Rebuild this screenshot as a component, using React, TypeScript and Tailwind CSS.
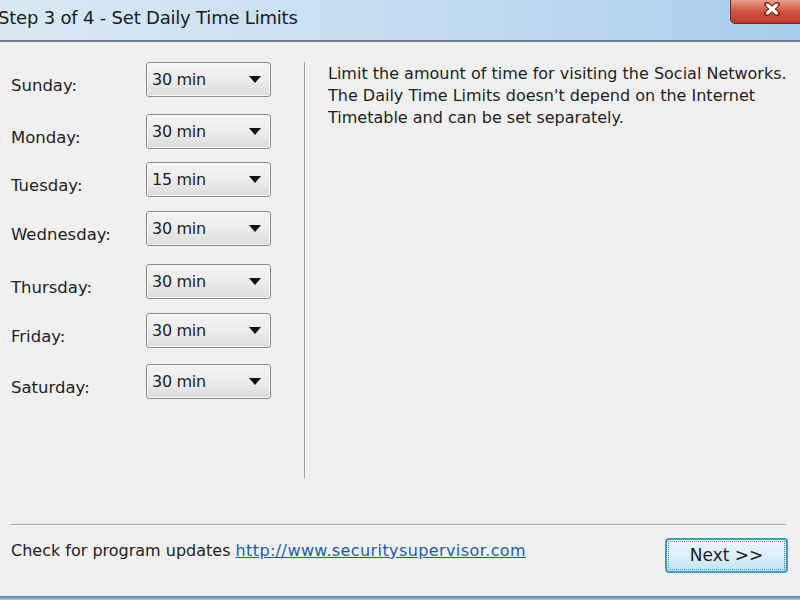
const LIMITS = [
  { day: "Sunday:", value: "30 min", gap: "mt-[20px]" },
  { day: "Monday:", value: "30 min", gap: "mt-[17px]" },
  { day: "Tuesday:", value: "15 min", gap: "mt-[13px]" },
  { day: "Wednesday:", value: "30 min", gap: "mt-[14px]" },
  { day: "Thursday:", value: "30 min", gap: "mt-[18px]" },
  { day: "Friday:", value: "30 min", gap: "mt-[14px]" },
  { day: "Saturday:", value: "30 min", gap: "mt-[16px]" },
];

function Combo({ value }: { value: string }) {
  return (
    <div className="w-[125px] h-[35px] rounded-[3px] border border-[#8a8a8a] bg-gradient-to-b from-[#f4f4f4] via-[#ececec] to-[#dcdcdc] flex items-center justify-between pl-[5px] pr-[9px] shadow-[inset_0_0_0_1px_#fbfbfb]">
      <span className="text-[16px] text-[#1e1e1e] tracking-[-0.3px]">{value}</span>
      <svg width="12" height="7" viewBox="0 0 12 7">
        <path d="M0 0h12L6 7z" fill="#111" />
      </svg>
    </div>
  );
}

export default function App() {
  return (
    <div
      className="w-[800px] h-[600px] overflow-hidden flex flex-col bg-[#f0f0f0] text-[#222]"
      style={{ fontFamily: '"DejaVu Sans", Tahoma, sans-serif' }}
    >
      {/* Caption bar */}
      <div className="h-[40px] shrink-0 relative bg-gradient-to-r from-[#dbe8f4] via-[#c5ddf2] to-[#a9cdee] flex items-start">
        <span className="ml-[-2px] mt-[4px] text-[18px] text-[#1b1b1b] tracking-[-0.2px]">
          Step 3 of 4 - Set Daily Time Limits
        </span>
        <div className="absolute right-[-12px] top-[-2px] w-[82px] h-[26px] rounded-b-[5px] border border-[#6b2a22] bg-gradient-to-b from-[#e8a394] via-[#d0553f] to-[#c0392a] flex items-start justify-center pl-[2px] pt-[3px]">
          <svg width="16" height="14" viewBox="0 0 16 14">
            <path d="M3 2.5l10 9M13 2.5l-10 9" stroke="#7a2418" strokeWidth="5.5" strokeLinecap="round" />
            <path d="M3.5 3l9 8M12.5 3l-9 8" stroke="#fff" strokeWidth="3.2" strokeLinecap="round" />
          </svg>
        </div>
      </div>
      <div className="h-[2px] shrink-0 bg-[#6f7d8c]" />

      {/* Body */}
      <div className="flex-1 flex min-h-0">
        <div className="w-[293px] shrink-0 flex flex-col ml-[11px]">
          {LIMITS.map((row) => (
            <div key={row.day} className={`${row.gap} flex items-start`}>
              <span className="w-[135px] text-[16.5px] leading-[20px] mt-[14px]">{row.day}</span>
              <Combo value={row.value} />
            </div>
          ))}
        </div>
        <div className="mt-[20px] h-[416px] w-[2px] border-l border-[#a0a0a0] bg-[#fdfdfd]" />
        <p className="ml-[22px] mt-[21px] text-[16px] leading-[22px] text-[#1e1e1e] w-[470px]">
          Limit the amount of time for visiting the Social Networks. The Daily Time Limits doesn't depend on the
          Internet Timetable and can be set separately.
        </p>
      </div>

      {/* Footer */}
      <div className="shrink-0 px-[11px] pb-[23px]">
        <div className="h-[2px] w-[775px] border-t border-[#a0a0a0] bg-[#fdfdfd]" />
        <div className="flex items-start justify-between mt-[12px]">
          <span className="text-[16px] mt-[1px]">
            Check for program updates{" "}
            <a className="text-[#1a5ea8] underline tracking-[0.4px]" href="#">
              http://www.securitysupervisor.com
            </a>
          </span>
          <button className="mr-[1px] w-[123px] h-[35px] rounded-[4px] border-2 border-[#3f9ac4] bg-gradient-to-b from-[#eaf6fc] via-[#dcf0fa] to-[#c3e3f3] text-[17px] text-[#1b1b1b] outline-1 outline-dotted outline-[#5a8ba6] -outline-offset-[4px]">
            Next &gt;&gt;
          </button>
        </div>
      </div>
      <div className="h-[4px] shrink-0 bg-gradient-to-b from-[#5b7fa3] to-[#a9c9e6]" />
    </div>
  );
}
